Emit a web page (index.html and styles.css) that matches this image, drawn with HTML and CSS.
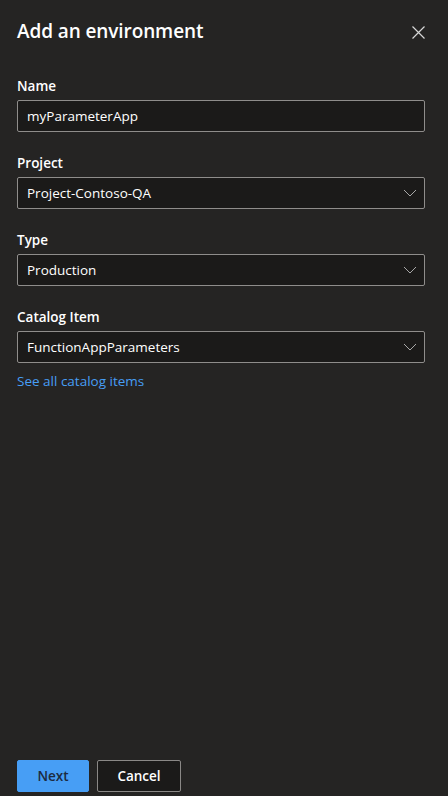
FILE: index.html
```html
<!DOCTYPE html>
<html lang="en">
<head>
<meta charset="utf-8">
<title>Add an environment</title>
<link rel="stylesheet" href="styles.css">
</head>
<body>
<div class="panel">
  <header class="head">
    <h1 class="title">Add an environment</h1>
    <button class="close" aria-label="Close">
      <svg width="13" height="13" viewBox="0 0 13 13"><path d="M0.5 0.5 L12.5 12.5 M12.5 0.5 L0.5 12.5" stroke="#d6d6d6" stroke-width="1.2" fill="none"/></svg>
    </button>
  </header>
  <main class="form">
    <div class="field">
      <label class="label">Name</label>
      <div class="input">myParameterApp</div>
    </div>
    <div class="field">
      <label class="label">Project</label>
      <div class="input select"><span>Project-Contoso-QA</span><svg class="chev" width="14" height="8" viewBox="0 0 14 8"><path d="M1 1 L7 7 L13 1" stroke="#a8a8a8" stroke-width="1" fill="none"/></svg></div>
    </div>
    <div class="field">
      <label class="label">Type</label>
      <div class="input select"><span>Production</span><svg class="chev" width="14" height="8" viewBox="0 0 14 8"><path d="M1 1 L7 7 L13 1" stroke="#a8a8a8" stroke-width="1" fill="none"/></svg></div>
    </div>
    <div class="field">
      <label class="label">Catalog Item</label>
      <div class="input select"><span>FunctionAppParameters</span><svg class="chev" width="14" height="8" viewBox="0 0 14 8"><path d="M1 1 L7 7 L13 1" stroke="#a8a8a8" stroke-width="1" fill="none"/></svg></div>
      <a class="link" href="#">See all catalog items</a>
    </div>
  </main>
  <footer class="foot">
    <button class="btn primary">Next</button>
    <button class="btn secondary">Cancel</button>
  </footer>
</div>
</body>
</html>
```
FILE: styles.css
```css
html, body {
  margin: 0;
  padding: 0;
  height: 100%;
  background: #252423;
}
body {
  font-family: "Open Sans", "Noto Sans", sans-serif;
  color: #ffffff;
}
.panel {
  height: 796px;
  display: flex;
  flex-direction: column;
  box-sizing: border-box;
  padding: 17px 23px 4px 17px;
}
.head {
  display: flex;
  align-items: center;
  justify-content: space-between;
  height: 28px;
}
.title {
  margin: 0;
  font-size: 19px;
  font-weight: 600;
  line-height: 28px;
  color: #ffffff;
  letter-spacing: -0.1px;
}
.close {
  background: none;
  border: 0;
  padding: 0;
  width: 13px;
  height: 13px;
  display: flex;
  margin-right: 0;
  margin-top: 3px;
}
.form {
  flex: 1;
  display: flex;
  flex-direction: column;
  gap: 21px;
  margin-top: 31px;
  width: 408px;
}
.field {
  display: flex;
  flex-direction: column;
}
.label {
  font-size: 13.5px;
  font-weight: 600;
  line-height: 20px;
  margin-bottom: 4px;
  color: #ffffff;
}
.input {
  box-sizing: border-box;
  height: 32px;
  background: #1b1a19;
  border: 1px solid #8f8d8b;
  border-radius: 2px;
  padding: 0 9px;
  display: flex;
  align-items: center;
  font-size: 13.5px;
  color: #ffffff;
}
.select {
  justify-content: space-between;
  padding-right: 7px;
}
.link {
  margin-top: 8px;
  font-size: 13.5px;
  line-height: 20px;
  color: #479ef5;
  text-decoration: none;
}
.foot {
  display: flex;
  gap: 8px;
}
.btn {
  box-sizing: border-box;
  height: 32px;
  border-radius: 2px;
  font-family: inherit;
  font-size: 13.5px;
  font-weight: 600;
  padding: 0;
}
.primary {
  width: 72px;
  background: #479ef5;
  border: 1px solid #479ef5;
  color: #1c2b40;
}
.secondary {
  width: 84px;
  background: #1b1a19;
  border: 1px solid #8a8886;
  color: #ffffff;
}
```
